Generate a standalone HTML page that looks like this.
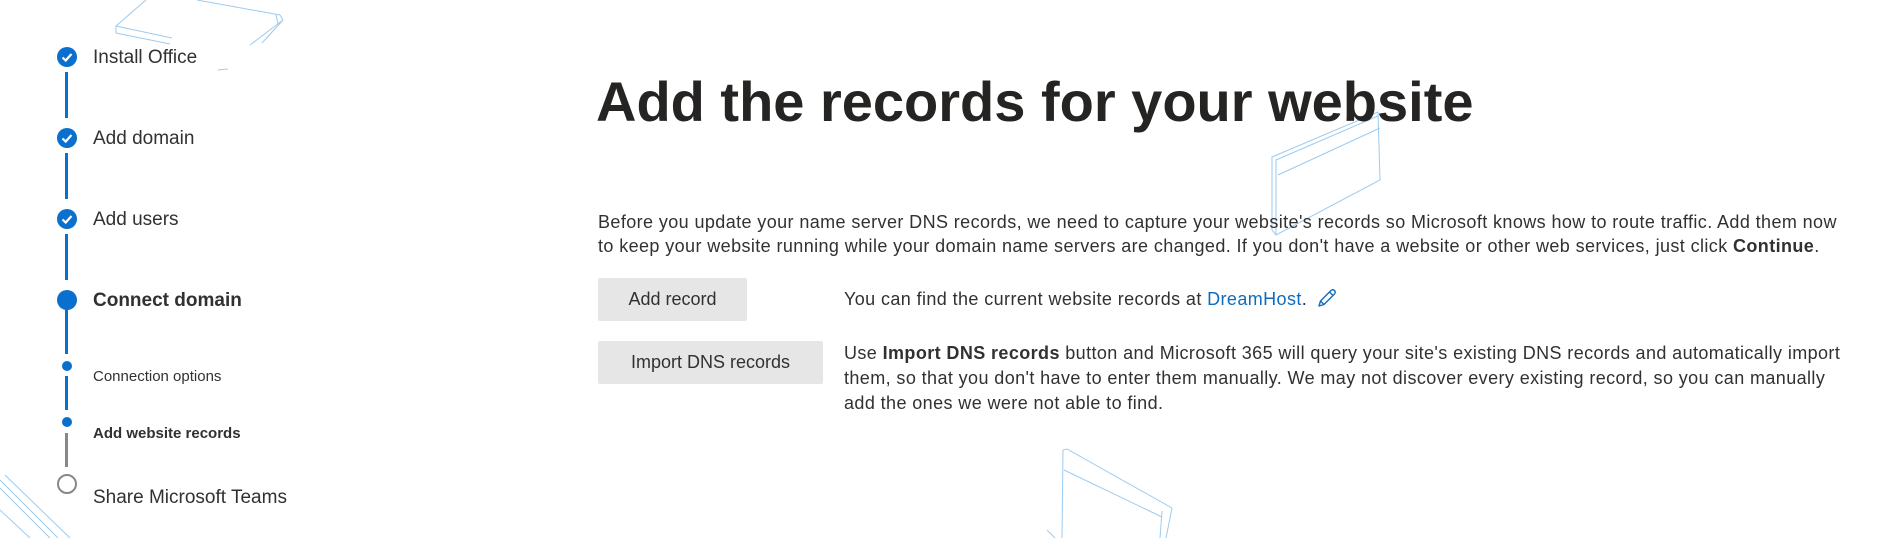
<!DOCTYPE html>
<html><head><meta charset="utf-8">
<style>
html,body{margin:0;padding:0;background:#fff;}
body{width:1899px;height:538px;position:relative;overflow:hidden;font-family:"Liberation Sans",sans-serif;color:#323130;}
.abs{position:absolute;white-space:nowrap;}
.step{position:absolute;left:93px;font-size:19px;line-height:24px;color:#323130;}
.sub{font-size:15px;}
.circ{position:absolute;left:57px;width:20px;height:20px;border-radius:50%;background:#0b6fce;}
.dot{position:absolute;left:62px;width:10px;height:10px;border-radius:50%;background:#0b6fce;}
.line{position:absolute;left:65px;width:3px;background:#0b6fce;}
.btn{position:absolute;background:#e6e6e6;border-radius:2px;font-size:18px;color:#323130;display:flex;align-items:center;justify-content:center;}
.t{font-size:18px;line-height:25px;letter-spacing:0.4px;}
</style></head><body>

<svg class="abs" style="left:0;top:0" width="1899" height="538">
 <g fill="none" stroke="#9ccbf0" stroke-width="1">
  <path d="M146 0 L116 26 L116 33 L170 44 M116 26 L172 38 M197 0 L280 15 L283 20 L250 45 M276 15 L278 24 M283 20 L262 43 M218 70 L228 69"/>
  <path d="M1272 157 L1378 112 L1380 180 L1276 235 L1272 230 Z M1276 235 L1276 160 L1378 116 M1278 175 L1380 128"/>
  <path d="M1063 450 L1067 449 L1172 508 L1166 538 M1063 450 L1062 538 M1064 470 L1162 517 M1162 511 L1160 538 M1047 530 L1055 538"/>
  <path d="M0 480 L58 538 M0 488 L50 538 M0 510 L30 538 M5 475 L70 538"/>
 </g>
</svg>

<div class="circ" style="top:47px"></div>
<div class="circ" style="top:128px"></div>
<div class="circ" style="top:209px"></div>
<svg class="abs" style="left:57px;top:47px" width="20" height="200"><g fill="none" stroke="#fff" stroke-width="2.2"><path d="M5.5 10.5 L8.7 13.5 L14.5 7"/><path d="M5.5 91.5 L8.7 94.5 L14.5 88"/><path d="M5.5 172.5 L8.7 175.5 L14.5 169"/></g></svg>
<div class="line" style="top:72px;height:46px"></div>
<div class="line" style="top:153px;height:46px"></div>
<div class="line" style="top:234px;height:46px"></div>
<div class="circ" style="top:290px"></div>
<div class="line" style="top:308px;height:46px"></div>
<div class="dot" style="top:361px"></div>
<div class="line" style="top:376px;height:34px"></div>
<div class="dot" style="top:417px"></div>
<div class="line" style="top:433px;height:34px;background:#8a8886"></div>
<div class="abs" style="left:57px;top:474px;width:16px;height:16px;border:2px solid #8a8886;border-radius:50%"></div>

<div class="step" style="top:46px">Install Office</div>
<div class="step" style="top:127px">Add domain</div>
<div class="step" style="top:208px">Add users</div>
<div class="step" style="top:289px;font-weight:bold">Connect domain</div>
<div class="step sub" style="top:365px">Connection options</div>
<div class="step sub" style="top:422px;font-weight:bold">Add website records</div>
<div class="step" style="top:486px">Share Microsoft Teams</div>

<div class="abs" style="left:596px;top:68px;font-size:56px;font-weight:bold;line-height:68px;color:#252423;letter-spacing:0px">Add the records for your website</div>

<div class="abs t" style="left:598px;top:210px">Before you update your name server DNS records, we need to capture your website's records so Microsoft knows how to route traffic. Add them now</div>
<div class="abs t" style="left:598px;top:234px">to keep your website running while your domain name servers are changed. If you don't have a website or other web services, just click <b>Continue</b>.</div>

<div class="btn" style="left:598px;top:278px;width:149px;height:43px">Add record</div>
<div class="btn" style="left:598px;top:341px;width:225px;height:43px">Import DNS records</div>

<div class="abs t" style="left:844px;top:287px">You can find the current website records at <span style="color:#0f6cbd">DreamHost</span>.</div>
<svg class="abs" style="left:1316px;top:287px" width="22" height="22"><path d="M3 19 L4.5 14 L15 3.5 Q17 2 18.5 3.5 Q20 5 18.5 7 L8 17.5 Z M13.5 5 L17 8.5 M4.5 14 L8 17.5" fill="none" stroke="#0f6cbd" stroke-width="1.4" stroke-linejoin="round"/></svg>

<div class="abs t" style="left:844px;top:341px">Use <b>Import DNS records</b> button and Microsoft 365 will query your site's existing DNS records and automatically import</div>
<div class="abs t" style="left:844px;top:366px">them, so that you don't have to enter them manually. We may not discover every existing record, so you can manually</div>
<div class="abs t" style="left:844px;top:391px">add the ones we were not able to find.</div>
</body></html>
